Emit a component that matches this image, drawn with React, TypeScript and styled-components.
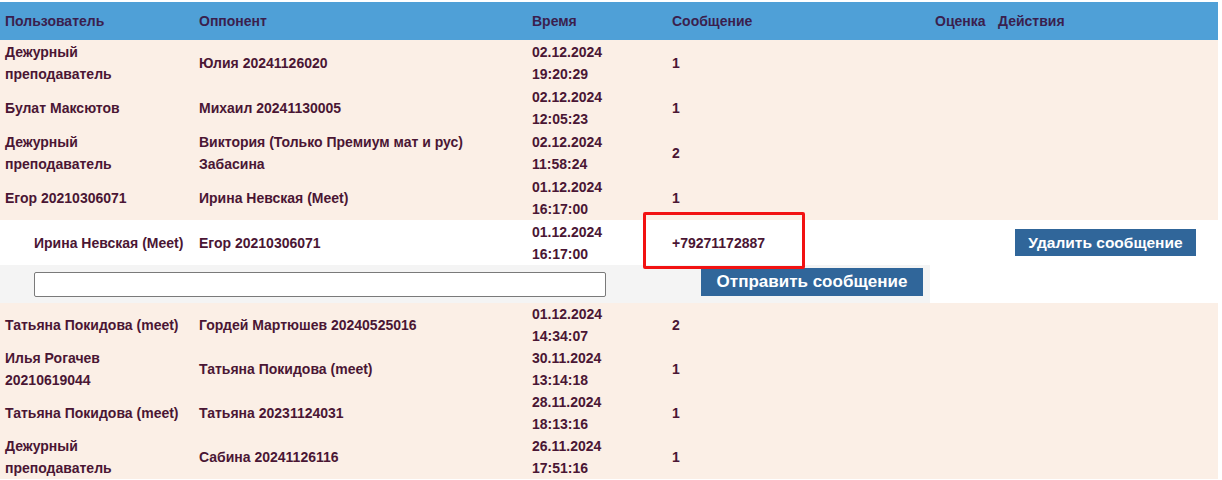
import React from "react";
import styled, { createGlobalStyle } from "styled-components";

const Global = createGlobalStyle`
  html, body { margin: 0; padding: 0; background: #ffffff; }
  body { font-family: "Liberation Sans", Arial, sans-serif; }
`;

const COLS = "194px 333px 140px 263px 63px 225px";

const Page = styled.div`
  padding-top: 2px;
  width: 1218px;
  position: relative;
`;

const HeaderRow = styled.div`
  display: grid;
  grid-template-columns: ${COLS};
  height: 38px;
  align-items: center;
  background: #4fa0d7;
`;

const HeadCell = styled.div`
  padding: 0 5px;
  font-size: 14px;
  font-weight: bold;
  color: #3a1f4e;
`;

const Row = styled.div<{ $h: number; $bg: string }>`
  display: grid;
  grid-template-columns: ${COLS};
  min-height: ${(p) => p.$h}px;
  align-items: center;
  background: ${(p) => p.$bg};
`;

const Cell = styled.div<{ $indent?: number }>`
  padding: 0 5px 0 ${(p) => p.$indent ?? 5}px;
  font-size: 14px;
  font-weight: bold;
  line-height: 22px;
  color: #4a1634;
  white-space: pre-line;
  position: relative;
`;

const ActionCell = styled.div`
  display: flex;
  justify-content: center;
`;

const Highlight = styled.div`
  position: absolute;
  left: -24px;
  top: -20px;
  width: 162px;
  height: 57px;
  box-sizing: border-box;
  border: 3px solid #f21212;
  border-radius: 2px;
  pointer-events: none;
  z-index: 2;
`;

const Button = styled.button<{ $size: number; $w: number; $h: number }>`
  width: ${(p) => p.$w}px;
  height: ${(p) => p.$h}px;
  background: #30669a;
  color: #ffffff;
  border: none;
  font-family: "Liberation Sans", Arial, sans-serif;
  font-weight: bold;
  font-size: ${(p) => p.$size}px;
  padding: 0;
  cursor: pointer;
`;

const ReplyRow = styled.div`
  display: grid;
  grid-template-columns: 930px 288px;
  height: 38px;
  background: #ffffff;
`;

const ReplyPanel = styled.div`
  display: flex;
  align-items: flex-start;
  background: #f4f4f4;
  padding-left: 34px;
`;

const ReplyInput = styled.input`
  width: 572px;
  height: 25px;
  box-sizing: border-box;
  margin-top: 7px;
  border: 1px solid #7a7a7a;
  border-radius: 2px;
  background: #ffffff;
  outline: none;
`;

const SendWrap = styled.div`
  margin-left: 95px;
  margin-top: 3px;
`;

type Msg = { user: string; opp: string; time: string; count: string };

const top: Msg[] = [
  { user: "Дежурный\nпреподаватель", opp: "Юлия 20241126020", time: "02.12.2024\n19:20:29", count: "1" },
  { user: "Булат Максютов", opp: "Михаил 20241130005", time: "02.12.2024\n12:05:23", count: "1" },
  { user: "Дежурный\nпреподаватель", opp: "Виктория (Только Премиум мат и рус)\nЗабасина", time: "02.12.2024\n11:58:24", count: "2" },
  { user: "Егор 20210306071", opp: "Ирина Невская (Meet)", time: "01.12.2024\n16:17:00", count: "1" },
];

const bottom: Msg[] = [
  { user: "Татьяна Покидова (meet)", opp: "Гордей Мартюшев 20240525016", time: "01.12.2024\n14:34:07", count: "2" },
  { user: "Илья Рогачев\n20210619044", opp: "Татьяна Покидова (meet)", time: "30.11.2024\n13:14:18", count: "1" },
  { user: "Татьяна Покидова (meet)", opp: "Татьяна 20231124031", time: "28.11.2024\n18:13:16", count: "1" },
  { user: "Дежурный\nпреподаватель", opp: "Сабина 20241126116", time: "26.11.2024\n17:51:16", count: "1" },
];

const BG = "#fbefe6";

function MsgRow({ m, h }: { m: Msg; h: number }) {
  return (
    <Row $h={h} $bg={BG}>
      <Cell>{m.user}</Cell>
      <Cell>{m.opp}</Cell>
      <Cell>{m.time}</Cell>
      <Cell>{m.count}</Cell>
      <Cell />
      <Cell />
    </Row>
  );
}

export default function App() {
  return (
    <>
      <Global />
      <Page>
        <HeaderRow>
          <HeadCell>Пользователь</HeadCell>
          <HeadCell>Оппонент</HeadCell>
          <HeadCell>Время</HeadCell>
          <HeadCell>Сообщение</HeadCell>
          <HeadCell>Оценка</HeadCell>
          <HeadCell>Действия</HeadCell>
        </HeaderRow>
        {top.map((m, i) => (
          <MsgRow key={i} m={m} h={45} />
        ))}
        <Row $h={45} $bg="#ffffff">
          <Cell $indent={34}>Ирина Невская (Meet)</Cell>
          <Cell>Егор 20210306071</Cell>
          <Cell>{"01.12.2024\n16:17:00"}</Cell>
          <Cell>
            +79271172887
            <Highlight />
          </Cell>
          <Cell />
          <ActionCell>
            <Button $size={15.5} $w={181} $h={27}>Удалить сообщение</Button>
          </ActionCell>
        </Row>
        <ReplyRow>
          <ReplyPanel>
            <ReplyInput type="text" />
            <SendWrap>
              <Button $size={17} $w={222} $h={28}>Отправить сообщение</Button>
            </SendWrap>
          </ReplyPanel>
          <div />
        </ReplyRow>
        {bottom.map((m, i) => (
          <MsgRow key={i} m={m} h={44} />
        ))}
      </Page>
    </>
  );
}
